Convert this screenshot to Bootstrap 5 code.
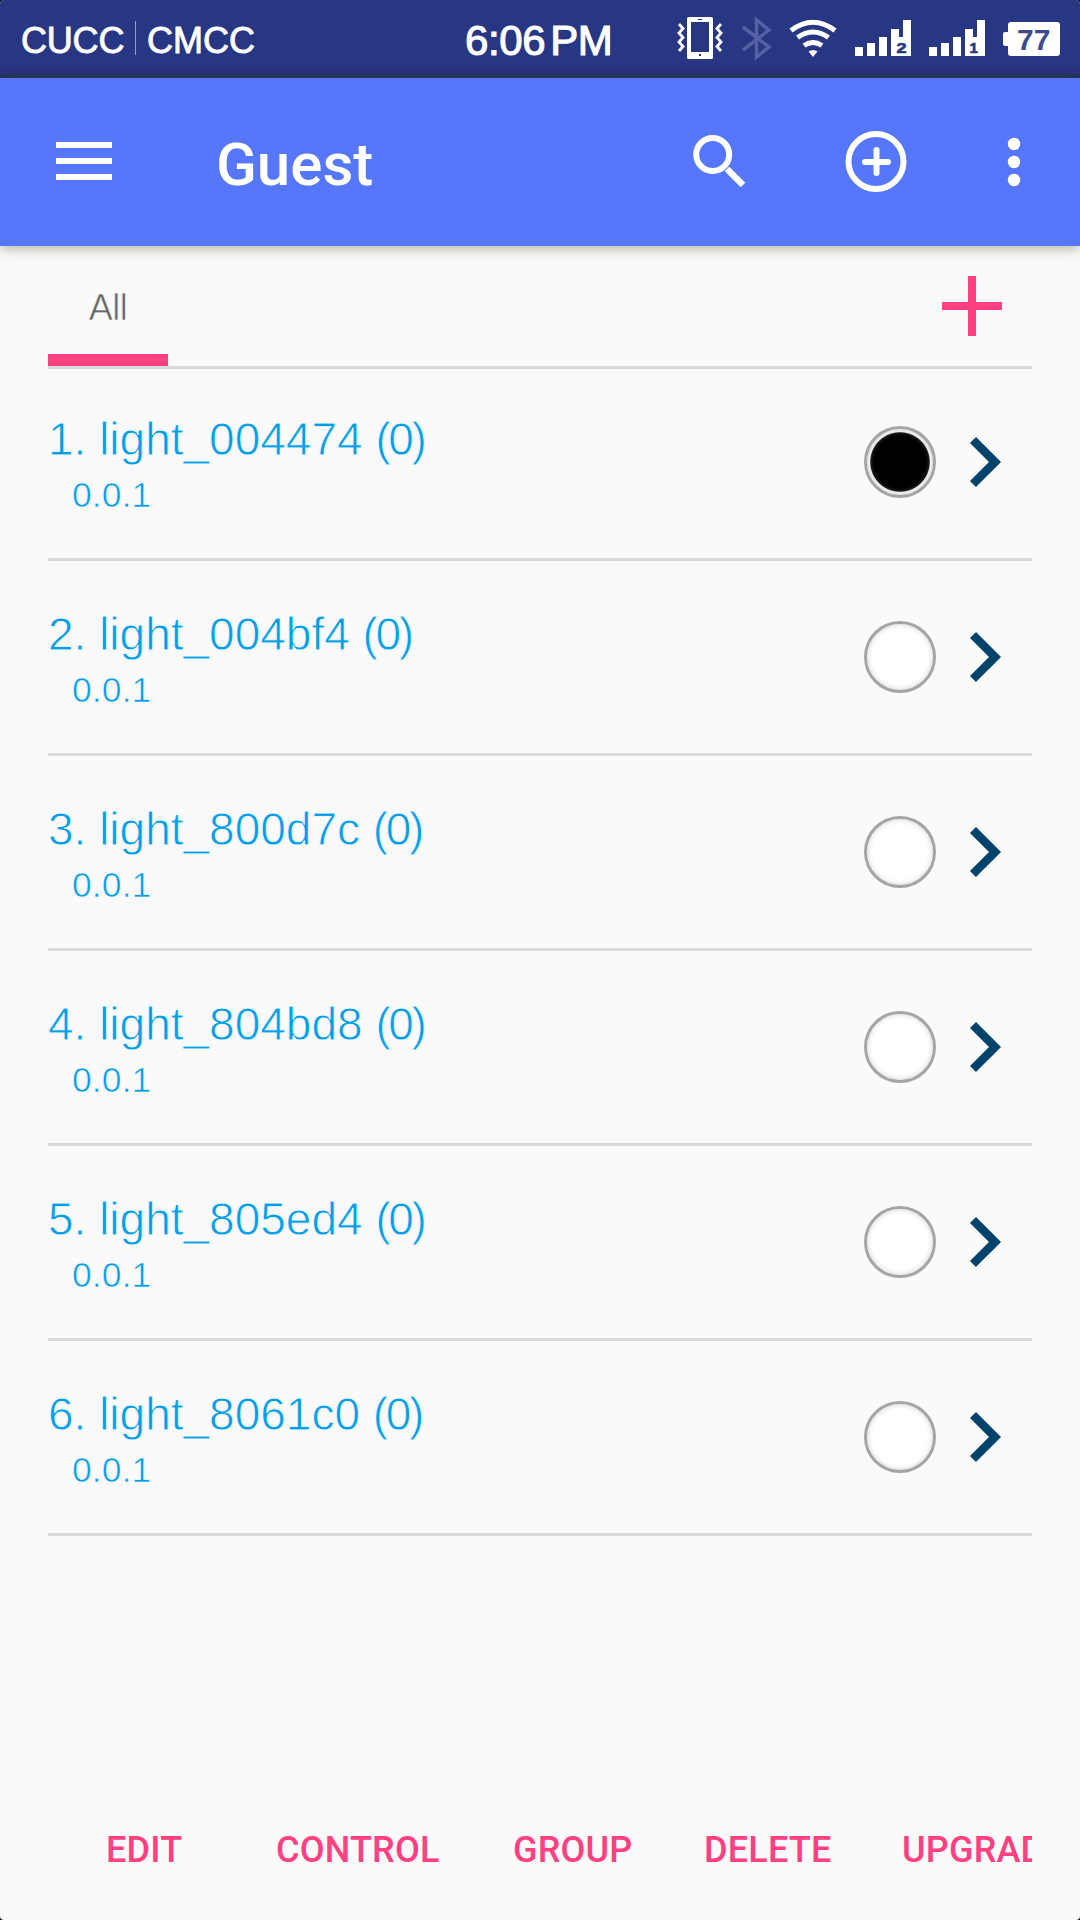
<!DOCTYPE html>
<html lang="en">
<head>
<meta charset="utf-8">
<meta name="viewport" content="width=device-width, initial-scale=1">
<title>Guest</title>
<link href="https://cdn.jsdelivr.net/npm/bootstrap@5.3.0/dist/css/bootstrap.min.css" rel="stylesheet">
<style>
html{background:#000}
body{background:#000;font-family:"Liberation Sans",Arial,sans-serif;margin:0}
.screen{width:1080px;height:1920px;background:#fafafa;border-radius:4px;overflow:hidden}
.statusbar{height:78px;background:linear-gradient(#283784 0 66px,#2a3280 67px 73px,#24325f 75px);color:#fff;line-height:1}
.carrier{font-size:36px;-webkit-text-stroke:.9px #fff;padding:23px 0 0 21px}
.carrier span{display:inline-block;white-space:nowrap}
.c1{width:114px;letter-spacing:-.2px}
.c2{width:121px;letter-spacing:0}
.rule{width:1px;height:34px;background:#8f9acb;margin:-2px 11px 0 0}
.clock{font-size:42px;-webkit-text-stroke:1.1px #fff;padding-top:20px;letter-spacing:-.4px;width:207px;white-space:nowrap;margin-left:73px}
.clock span{margin-left:5px}
.appbar{height:168px;background:#5677fc;color:#fff;box-shadow:0 2px 12px rgba(60,70,20,.42);position:relative}
.appbar h1{font:500 60px/1 Roboto,sans-serif;margin:6px 0 0 104px;width:460px}
.plain{border:0;background:none;padding:0;display:block;line-height:0;color:inherit}
.content-pad{padding:0 48px}
.tabs{height:123px;border-bottom:3px solid #d9d9d9}
.tab-all{width:120px;height:120px;border-bottom:12px solid #ff4081;color:#666;font-size:36px;line-height:1;padding-top:44px;letter-spacing:-.5px;-webkit-text-stroke:.6px #fafafa}
.addgroup{margin:30px 30px 0 0}
.device{height:195px;padding-top:3px;border-bottom:3px solid #d9d9d9;color:#009eea}
.device:first-child{height:192px;padding-top:0}
.dname{font-size:46px;line-height:52px;padding-top:44px;white-space:nowrap;letter-spacing:0;-webkit-text-stroke:.8px #fafafa}
.dname span{letter-spacing:-2.4px}
.daddr{font-size:35.5px;line-height:40px;margin:10px 0 0 24px;letter-spacing:.1px;-webkit-text-stroke:.6px #fafafa}
.bulb{width:72px;height:72px;border:3px solid #a5a5a5;border-radius:50%;background:#fff;box-shadow:inset 0 0 5px 1px #ddd;margin-top:57px}
.bulb.off{background:radial-gradient(circle,#000 29.3px,#f4f4f4 30.3px)}
.chev{margin:67px 30px 0 33px}
.actions{height:138px;margin-top:246px;overflow:hidden;color:#ff4081;font:500 36px/1 Roboto,sans-serif;letter-spacing:.2px;padding:50px 0 0 58px;white-space:nowrap}
.actions button{border:0;background:none;color:inherit;font:inherit;letter-spacing:inherit;line-height:1;padding:0;flex:none;text-align:left}
</style>
</head>
<body>
<div class="screen d-flex flex-column">
  <header class="statusbar d-flex flex-shrink-0">
    <div class="carrier d-flex"><span class="c1">CUCC</span><i class="rule"></i><span class="c2">CMCC</span></div>
    <div class="clock ms-auto">6:06<span>PM</span></div>
    <svg width="408" height="66" viewBox="672 0 408 66" fill="#fff">
      <path fill-rule="evenodd" d="M688.500 17h23q1.500 0 1.500 1.500v39q0 1.500-1.500 1.500h-23q-1.500 0-1.500-1.500v-39q0-1.500 1.500-1.500zM691 22v30h18v-30zM698 19v1h4v-1zM699 54v2h2v-2z"/>
      <g fill="none" stroke="#fff" stroke-width="2.800"><path d="M679 24l4 4.500-4 4.500 4 4.500-4 4.500 4 4.500-4 4.500M721 24l-4 4.500 4 4.500-4 4.500 4 4.500-4 4.500 4 4.500"/></g>
      <path d="M743 27l26 20-12.500 10V20L769 30 743 50" fill="none" stroke="#5561a4" stroke-width="3.500"/>
      <g fill="none" stroke="#fff" stroke-width="5"><path d="M791 30.500Q813 14 835 30.500"/><path d="M797.500 37.500Q813 26.500 828.500 37.500"/><path d="M804 45.500Q813 39.500 822 45.500"/></g>
      <path d="M808.500 51.500q4.500-3 9 0L813 57z"/>
      <path d="M855 47h8v9h-8zM867 43h8v13h-8zM879 37h8v19h-8zM891 29h8v8h4V20h8v36h-20z"/>
      <path transform="translate(74 0)" d="M855 47h8v9h-8zM867 43h8v13h-8zM879 37h8v19h-8zM891 29h8v8h4V20h8v36h-20z"/>
      <g fill="#283784" stroke="#283784" stroke-width=".7" font-family="Liberation Sans,sans-serif" font-weight="700"><text x="896.500" y="53" font-size="15" textLength="10" lengthAdjust="spacingAndGlyphs">2</text><text x="969.500" y="53" font-size="15">1</text></g>
      <path d="M1011 22h46q3 0 3 3v28q0 3-3 3h-46q-3 0-3-3v-7h-3q-2 0-2-2V34q0-2 2-2h3v-7q0-3 3-3z"/>
      <text x="1017" y="50" font-family="Liberation Sans,sans-serif" font-size="30" font-weight="700" fill="#3c4a8e">77</text>
    </svg>
  </header>
  <nav class="appbar d-flex align-items-center flex-shrink-0">
    <button class="plain ms-0" aria-label="Menu"><svg width="112" height="56" viewBox="0 134 112 56" fill="#fff"><path d="M56 142h56v6H56zM56 158h56v6H56zM56 174h56v6H56z"/></svg></button>
    <h1>Guest</h1>
    <svg class="ms-auto" width="400" height="80" viewBox="680 122 400 80" fill="none" stroke="#fff" stroke-width="6">
      <circle cx="712.700" cy="154.500" r="16.500"/><path d="M727 169l16 16" stroke-width="6.500"/>
      <circle cx="876" cy="161.500" r="27.500"/><path d="M865 162h23M876.500 150v23" stroke-linecap="round" stroke-width="6"/>
      <g fill="#fff" stroke="none"><circle cx="1014" cy="144" r="6.200"/><circle cx="1014" cy="162" r="6.200"/><circle cx="1014" cy="180" r="6.200"/></g>
    </svg>
  </nav>
  <main class="content-pad flex-grow-1 d-flex flex-column">
    <div class="tabs d-flex justify-content-between flex-shrink-0">
      <div class="tab-all text-center">All</div>
      <button class="plain addgroup align-self-start" aria-label="Add"><svg width="60" height="60" fill="#ff4081"><path d="M0 26h60v8H0zM26 0h8v60h-8z"/></svg></button>
    </div>
    <div id="devices"></div>
    <footer class="actions d-flex align-items-start">
      <button style="width:170px">EDIT</button><button style="width:237px">CONTROL</button><button style="width:191px">GROUP</button><button style="width:198px">DELETE</button><button>UPGRADE</button>
    </footer>
  </main>
</div>
<script src="https://cdn.jsdelivr.net/npm/bootstrap@5.3.0/dist/js/bootstrap.bundle.min.js"></script>
<script>
document.getElementById('devices').innerHTML = ['004474','004bf4','800d7c','804bd8','805ed4','8061c0'].map((id, i) => `
  <div class="device d-flex align-items-start">
    <div class="flex-grow-1"><div class="dname">${i + 1}. light_${id} <span>(0)</span></div><div class="daddr">0.0.1</div></div>
    <div class="bulb${i ? '' : ' off'}"></div>
    <svg class="chev" width="33" height="52" viewBox="969 436 33 52"><path d="M973 440l22 22-22 22" fill="none" stroke="#00446c" stroke-width="8.500"/></svg>
  </div>`).join('');
</script>
</body>
</html>
